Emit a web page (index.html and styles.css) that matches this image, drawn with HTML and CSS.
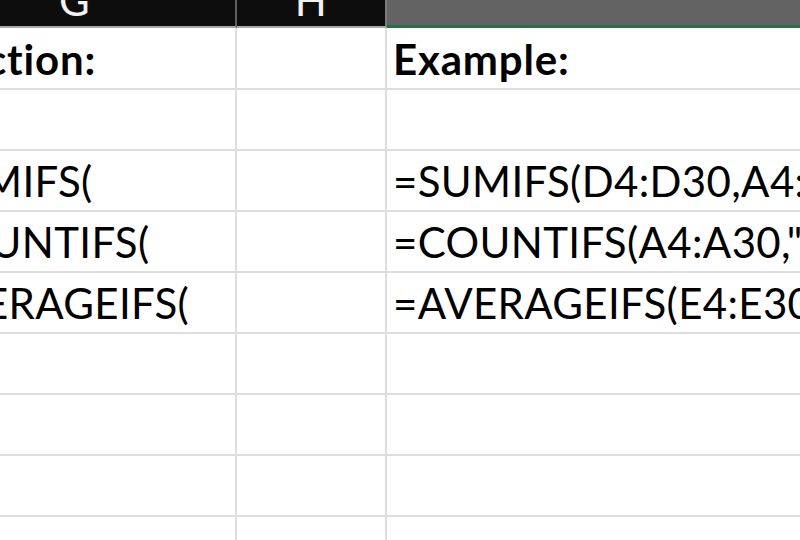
FILE: index.html
```html
<!DOCTYPE html>
<html>
<head>
<meta charset="utf-8">
<link rel="stylesheet" href="styles.css">
</head>
<body>
<div class="sheet">
  <div class="hdr hdr-g"><span class="hl">G</span></div>
  <div class="hdr hdr-h"><span class="hl">H</span></div>
  <div class="hdr hdr-i"></div>

  <div class="cell g first bold"><span class="tx">Function:</span></div>
  <div class="cell h first"></div>
  <div class="cell i first bold"><span class="tx">Example:</span></div>

  <div class="cell g"></div><div class="cell h"></div><div class="cell i"></div>

  <div class="cell g"><span class="tx">=SUMIFS(</span></div>
  <div class="cell h"></div>
  <div class="cell i"><span class="tx">=SUMIFS(D4:D30,A4:A30,"Blue")</span></div>

  <div class="cell g"><span class="tx">=COUNTIFS(</span></div>
  <div class="cell h"></div>
  <div class="cell i"><span class="tx">=COUNTIFS(A4:A30,"Blue")</span></div>

  <div class="cell g"><span class="tx">=AVERAGEIFS(</span></div>
  <div class="cell h"></div>
  <div class="cell i"><span class="tx">=AVERAGEIFS(E4:E30,A4:A30,"Blue")</span></div>

  <div class="cell g"></div><div class="cell h"></div><div class="cell i"></div>
  <div class="cell g"></div><div class="cell h"></div><div class="cell i"></div>
  <div class="cell g"></div><div class="cell h"></div><div class="cell i"></div>
  <div class="cell g"></div><div class="cell h"></div><div class="cell i"></div>
</div>
</body>
</html>
```

FILE: styles.css
```css
html, body {
  margin: 0;
  padding: 0;
  background: #ffffff;
  overflow: hidden;
}
.sheet {
  width: 800px;
  height: 540px;
  overflow: hidden;
  display: grid;
  grid-template-columns: 237px 150px 1fr;
  grid-template-rows: 28px 62px repeat(8, 61px);
  font-family: Lato, "Liberation Sans", sans-serif;
  font-size: 42px;
  letter-spacing: 0.35px;
  color: #000;
}
.hdr {
  box-sizing: border-box;
  background: #0d0d0d;
  border-bottom: 2px solid #a8a8a8;
  overflow: hidden;
  color: #f2f2f2;
  text-align: center;
  line-height: 42px;
}
.hdr-g {
  border-right: 2px solid #5e5e5e;
  padding-right: 86px;
}
.hdr-h {
  border-right: 2px solid #7a7a7a;
}
.hdr-i {
  background: #636363;
  border-bottom: 3px solid #217346;
}
.hl {
  display: block;
  margin-top: -21px;
}
.cell {
  box-sizing: border-box;
  border-bottom: 2px solid #dedede;
  display: flex;
  align-items: flex-end;
  overflow: hidden;
  white-space: nowrap;
  line-height: 42px;
  padding-bottom: 8px;
}
.cell.g, .cell.h {
  border-right: 2px solid #dedede;
}
.cell.g .tx {
  margin-left: -96px;
}
.cell.g.bold .tx {
  margin-left: -86px;
}
.cell.i {
  padding-left: 6px;
}
.bold {
  font-weight: 700;
  letter-spacing: 0.8px;
}
```
